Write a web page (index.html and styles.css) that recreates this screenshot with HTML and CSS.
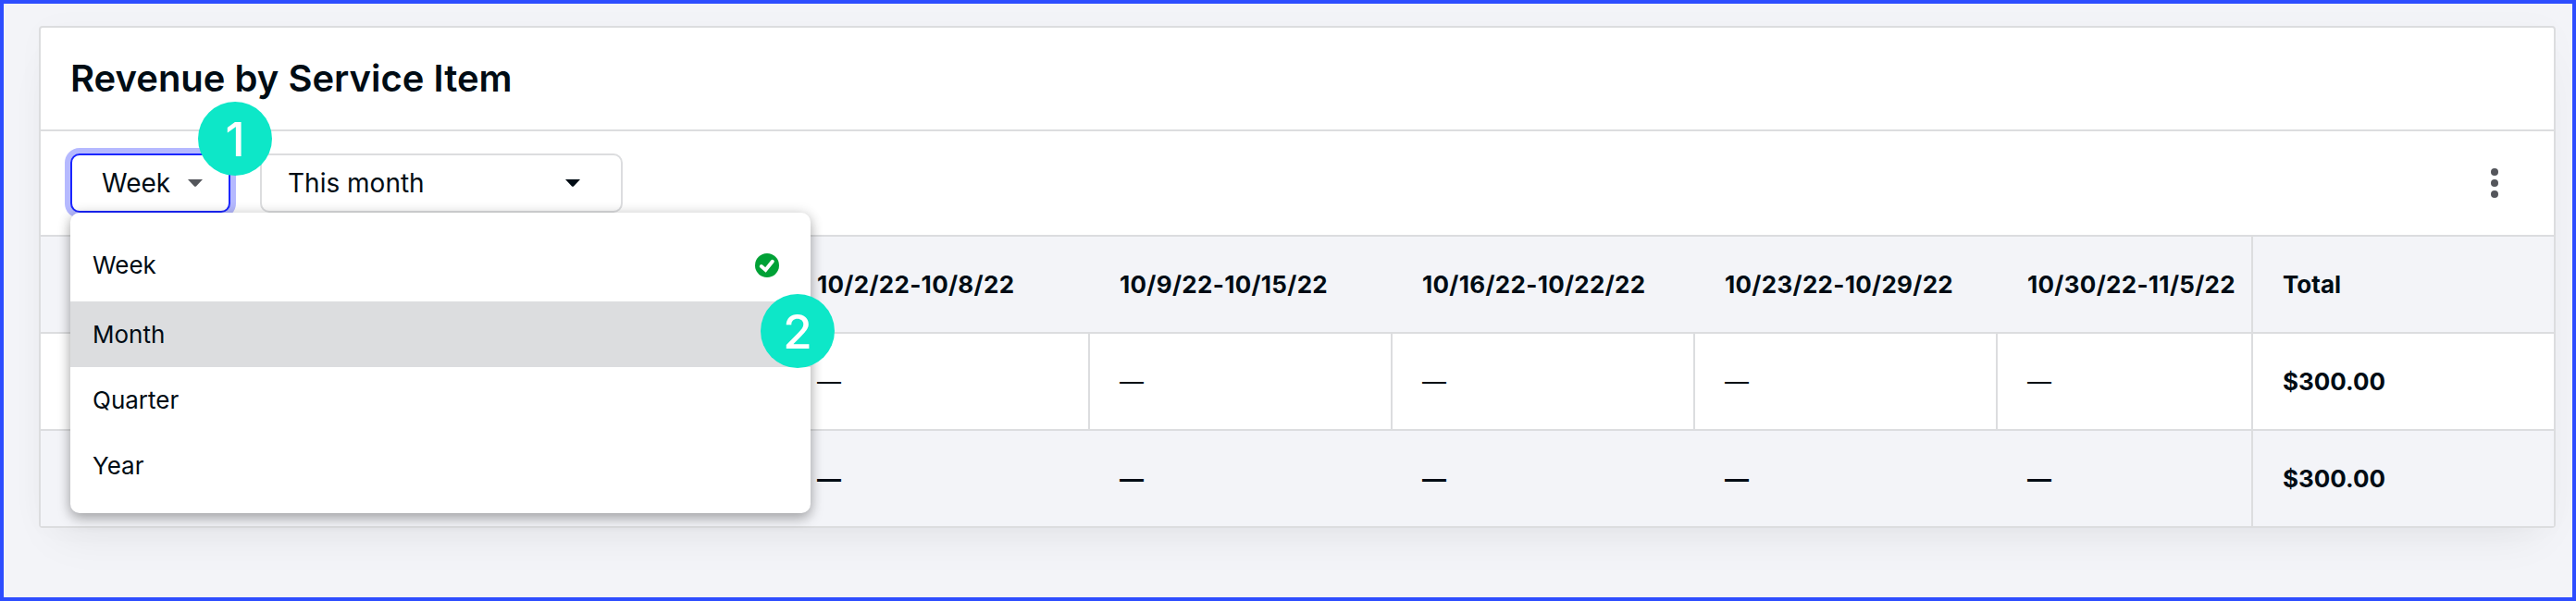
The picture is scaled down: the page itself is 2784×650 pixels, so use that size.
FILE: index.html
```html
<!DOCTYPE html>
<html lang="en">
  <head>
    <meta charset="UTF-8" />
    <meta name="viewport" content="width=device-width, initial-scale=1.0" />
    <title>Revenue by Service Item</title>
    <link rel="stylesheet" href="styles.css">
  </head>
  <body>
    <div class="card">
      <div class="card-header">
        <h1>Revenue by Service Item</h1>
      </div>
      <div class="toolbar">
        <div class="dropdown">
          <button class="select select-interval" type="button">
            <span>Week</span>
            <svg class="caret" viewBox="0 0 16 8"><path d="M0 0h16L9 7.4a1.5 1.5 0 0 1-2 0z" /></svg>
          </button>
          <span class="badge badge-one">1</span>
          <ul class="menu">
            <li class="menu-item current">
              Week
              <svg class="check" viewBox="0 0 26 26">
                <circle cx="13" cy="13" r="13" />
                <path d="M6.8 14l4.6 4L18.8 8.8" />
              </svg>
            </li>
            <li class="menu-item active">
              Month
              <span class="badge badge-two">2</span>
            </li>
            <li class="menu-item">Quarter</li>
            <li class="menu-item">Year</li>
          </ul>
        </div>
        <button class="select select-range" type="button">
          <span>This month</span>
          <svg class="caret" viewBox="0 0 16 8"><path d="M0 0h16L9 7.4a1.5 1.5 0 0 1-2 0z" /></svg>
        </button>
        <button class="more" type="button" aria-label="More options">
          <svg viewBox="0 0 8 32"><circle cx="4" cy="4" r="4" /><circle cx="4" cy="16" r="4" /><circle cx="4" cy="28" r="4" /></svg>
        </button>
      </div>
      <table>
        <colgroup>
          <col class="col-item" />
          <col class="col-week" span="4" />
          <col class="col-last" />
          <col class="col-week" />
        </colgroup>
        <thead>
          <tr>
            <th></th>
            <th>10/2/22-10/8/22</th>
            <th>10/9/22-10/15/22</th>
            <th>10/16/22-10/22/22</th>
            <th>10/23/22-10/29/22</th>
            <th>10/30/22-11/5/22</th>
            <th class="total">Total</th>
          </tr>
        </thead>
        <tbody>
          <tr>
            <td></td>
            <td>—</td>
            <td>—</td>
            <td>—</td>
            <td>—</td>
            <td>—</td>
            <td class="total">$300.00</td>
          </tr>
        </tbody>
        <tfoot>
          <tr>
            <td></td>
            <td>—</td>
            <td>—</td>
            <td>—</td>
            <td>—</td>
            <td>—</td>
            <td class="total">$300.00</td>
          </tr>
        </tfoot>
      </table>
    </div>
  </body>
</html>
```
FILE: styles.css
```css
* {
  box-sizing: border-box;
}
body {
  margin: 0;
  height: 650px;
  padding: 24px 18px 0 38px;
  border: 4px solid #2d4dff;
  background-color: #f3f4f8;
  color: #000c14;
  font-family: Inter, sans-serif;
  font-size: 26px;
  overflow: hidden;
}
.card {
  height: 543px;
  border: 2px solid #dcdddf;
  border-radius: 4px;
  background-color: white;
  box-shadow: 0 24px 48px -20px rgba(0, 0, 0, 0.08), 0 0 36px rgba(0, 0, 0, 0.02);
}
.card-header {
  display: flex;
  align-items: center;
  height: 112px;
  padding: 0 32px 2px;
  border-bottom: 2px solid #dcdddf;
}
h1 {
  margin: 0;
  font-size: 40px;
  font-weight: 600;
}
.toolbar {
  display: flex;
  align-items: center;
  height: 114px;
  padding: 0 32px;
  border-bottom: 2px solid #dcdddf;
}
.dropdown {
  position: relative;
  margin-right: 32px;
}
.select {
  display: flex;
  align-items: center;
  justify-content: space-between;
  height: 64px;
  border: 2px solid #dcdddf;
  border-radius: 10px;
  background-color: white;
  color: #000c14;
  font-family: inherit;
  font-size: 28px;
}
.select-interval {
  width: 173px;
  padding: 0 28px 0 32px;
  border-color: #1b26ff;
  box-shadow: 0 0 0 6px #b5b9ff;
}
.select-range {
  width: 392px;
  padding: 0 44px 0 28px;
}
.caret {
  width: 16px;
  height: 8px;
  fill: #000c14;
}
.select-interval .caret {
  fill: #54565b;
}
.more {
  display: flex;
  margin-left: auto;
  padding: 0 28px;
  border: none;
  background: none;
}
.more svg {
  width: 8px;
  height: 32px;
  fill: #54565b;
}
.menu {
  position: absolute;
  top: 64px;
  left: 0;
  z-index: 1;
  width: 800px;
  height: 325px;
  margin: 0;
  padding: 21px 0 16px;
  border-radius: 10px;
  background-color: white;
  box-shadow: 0 6px 14px rgba(0, 0, 0, 0.28), 0 0 14px rgba(0, 0, 0, 0.12);
  list-style: none;
}
.menu-item {
  position: relative;
  display: flex;
  align-items: center;
  justify-content: space-between;
  height: 71px;
  padding: 0 34px 0 24px;
}
.menu-item.current {
  margin-bottom: 4px;
}
.menu-item.active {
  background-color: #dcdddf;
}
.check {
  width: 26px;
  height: 26px;
}
.check circle {
  fill: #00a136;
}
.check path {
  fill: none;
  stroke: white;
  stroke-width: 4;
  stroke-linecap: round;
}
.badge {
  position: absolute;
  z-index: 2;
  display: flex;
  align-items: center;
  justify-content: center;
  width: 80px;
  height: 80px;
  border-radius: 50%;
  background-color: #0de7c8;
  color: white;
  font-size: 51px;
  font-weight: 500;
}
.badge-one {
  top: -56px;
  left: 138px;
}
.badge-two {
  top: -8px;
  right: -26px;
}
table {
  width: 2716px;
  table-layout: fixed;
  border-collapse: separate;
  border-spacing: 0;
}
.col-item {
  width: 807px;
}
.col-week {
  width: 327px;
}
.col-last {
  width: 274px;
}
th,
td {
  height: 105px;
  padding: 0 0 0 32px;
  border-bottom: 2px solid #dcdddf;
  text-align: left;
  white-space: nowrap;
}
thead,
tfoot {
  background-color: #f3f4f8;
}
th,
tfoot td,
.total {
  font-weight: 700;
}
th {
  letter-spacing: 0.3px;
}
tbody td {
  border-right: 2px solid #dcdddf;
}
tbody td:nth-last-child(2),
tbody td:last-child {
  border-right: none;
}
tfoot td {
  height: 103px;
  border-bottom: none;
}
.total {
  border-left: 2px solid #dcdddf;
  letter-spacing: normal;
}
```
